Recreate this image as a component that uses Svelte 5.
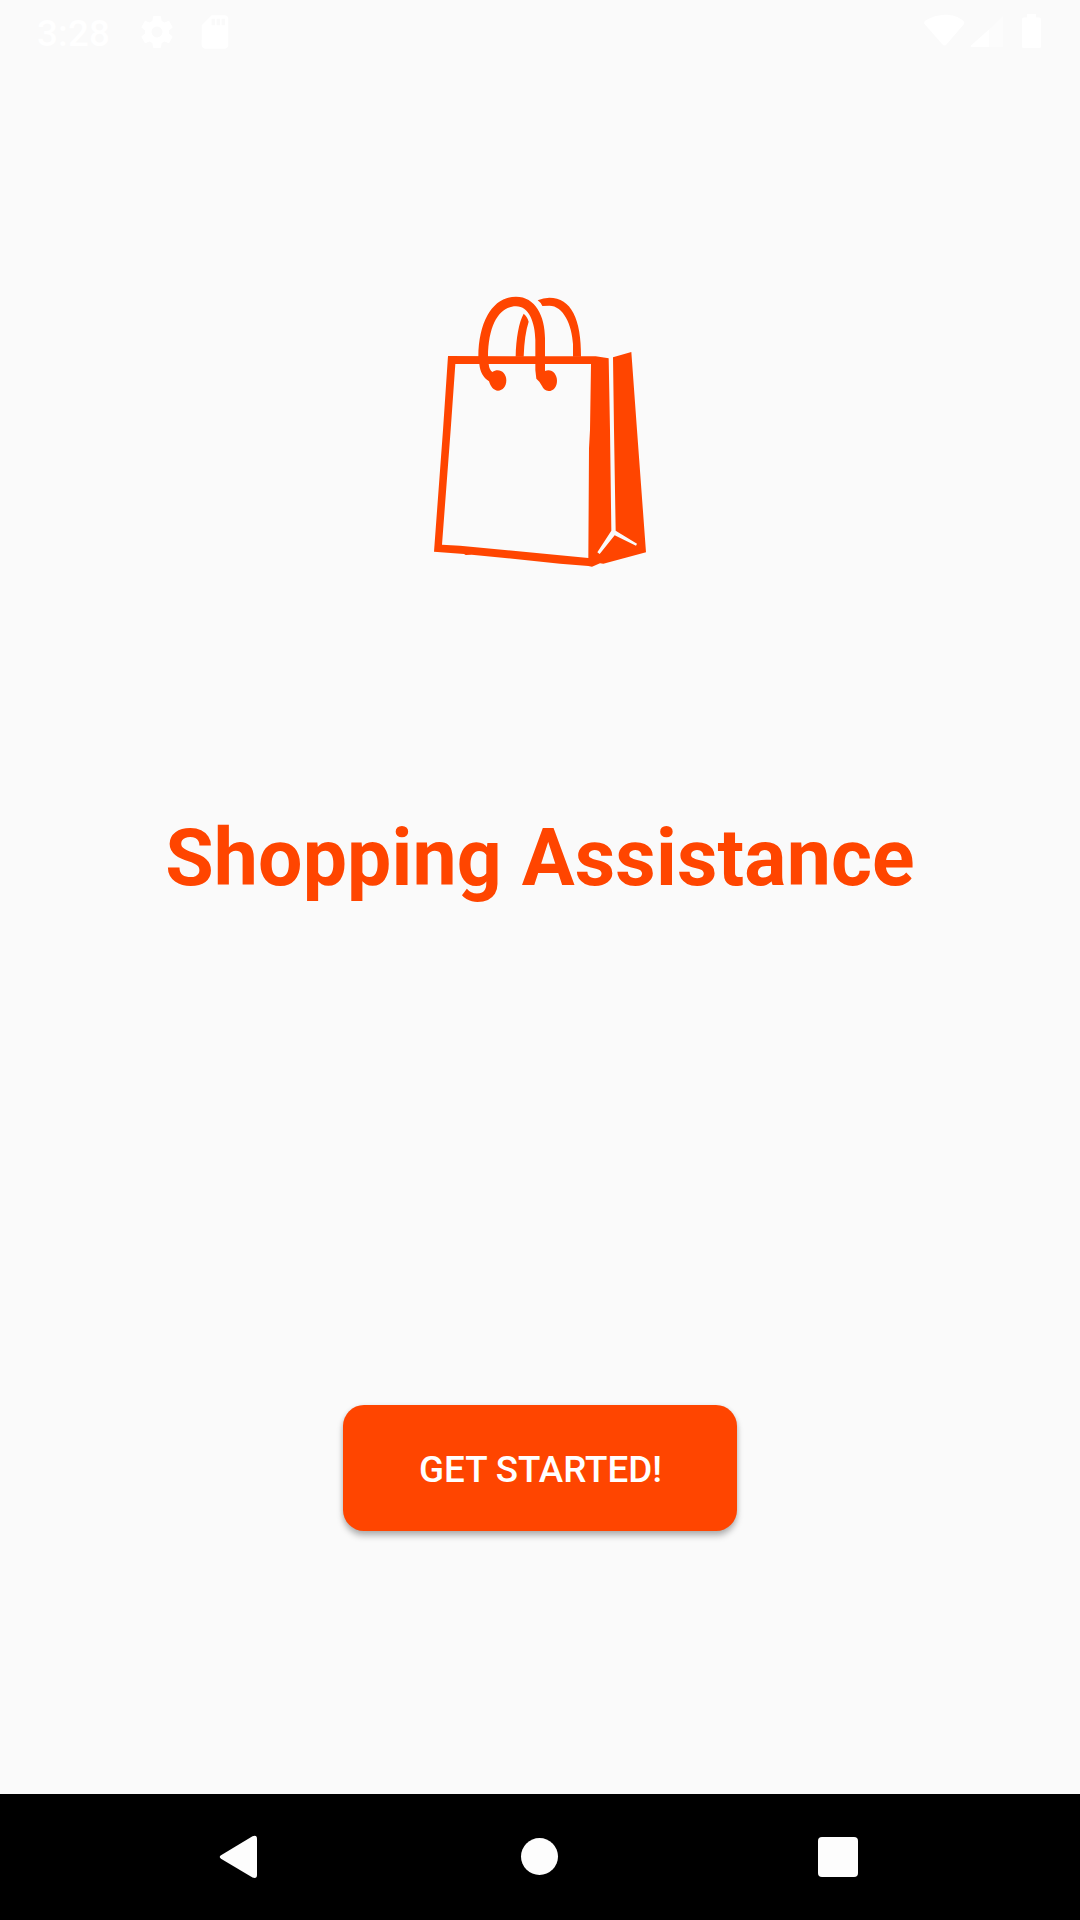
<script>
  let time = '3:28';
  let title = 'Shopping Assistance';
</script>

<div class="screen">
  <header class="status">
    <div class="left">
      <span class="time">{time}</span>
      <svg class="gear" width="40" height="40" viewBox="0 0 24 24">
        <path d="M19.14 12.94c.04-.3.06-.61.06-.94 0-.32-.02-.64-.07-.94l2.03-1.58c.18-.14.23-.41.12-.61l-1.92-3.32c-.12-.22-.37-.29-.59-.22l-2.39.96c-.5-.38-1.03-.7-1.62-.94l-.36-2.54c-.04-.24-.24-.41-.48-.41h-3.84c-.24 0-.43.17-.47.41l-.36 2.54c-.59.24-1.13.57-1.62.94l-2.39-.96c-.22-.08-.47 0-.59.22L2.74 8.87c-.12.21-.08.47.12.61l2.03 1.58c-.05.3-.09.63-.09.94s.02.64.07.94l-2.03 1.58c-.18.14-.23.41-.12.61l1.92 3.32c.12.22.37.29.59.22l2.39-.96c.5.38 1.03.7 1.62.94l.36 2.54c.05.24.24.41.48.41h3.84c.24 0 .44-.17.47-.41l.36-2.54c.59-.24 1.13-.56 1.62-.94l2.39.96c.22.08.47 0 .59-.22l1.92-3.32c.12-.22.07-.47-.12-.61l-2.01-1.58zM12 15.25c-1.790 0-3.250-1.460-3.250-3.250s1.460-3.250 3.250-3.250 3.250 1.460 3.250 3.250-1.460 3.250-3.250 3.250z" />
      </svg>
      <svg class="card" width="40" height="40" viewBox="0 0 24 24">
        <path d="M18 2h-8L4.020 8 4 20c0 1.100.9 2 2 2h12c1.100 0 2-.9 2-2V4c0-1.100-.9-2-2-2zm-6 6h-2V4h2v4zm3 0h-2V4h2v4zm3 0h-2V4h2v4z" />
      </svg>
    </div>
    <svg class="signals" width="120" height="36" viewBox="0 0 120 36">
      <path d="M1.2 6.8C13-1.2 30-1.2 39.2 6.8Q41.200 8.500 39.600 10.500L22.500 30.500Q20.500 32.500 18.500 30.500L1 10.500Q-.8 8.500 1.200 6.800Z" />
      <path class="dim" d="M65 15.500L79 2V33H65Z" />
      <path d="M65 15.500V33H48Q46 33 47 31.500Z" />
      <path d="M103 0H112V3.500H115.500Q117 3.500 117 5V32.500Q117 34 115.500 34H99.500Q98 34 98 32.500V5Q98 3.500 99.500 3.500H103Z" />
    </svg>
  </header>

  <main>
    <svg class="bag" width="240" height="300" viewBox="0 0 720 900">
      <path fill-rule="evenodd" d="M84 228L527 229L566 235L570 450L574 752L532 817L539 822L584 766L648 797L651 791L587 752L582 450L579 232L634 216L651 450L678 817L550 851L540 850L516 860L505 858L420 851L155 824L137 825L132 822L42 815L69 450ZM106 252L92 450L66 794L120 797L505 834L507 505L510 450L513 252Z" />
      <path d="M175 230C176 118 222 50 288 50C346 50 375 108 375 175V273C395 265 411 282 411 302C411 320 400 333 386 333C376 333 370 326 366 318L358 305L349 296L346 270V180C345 128 327 79 288 79C240 79 205 130 204 230L206 252Q208 270 217 276C236 263 259 276 259 301C259 319 248 332 234 332C221 332 212 320 207 304C190 293 180 275 178 252Z" />
      <path d="M353 61Q370 53 388 53C454 53 484 118 483 230H459V192C456 135 430 77 388 77Q377 77 367 78Q362 67 353 61Z" />
      <path d="M287 230C288 175 297 125 311 101Q321 108 326 125Q313 165 311 230Z" />
    </svg>
    <h1>{title}</h1>
    <button type="button">GET STARTED!</button>
  </main>

  <nav>
    <svg width="44" height="44" viewBox="0 0 44 44">
      <path d="M4 20.300L35.500 1.200Q40 -.5 40 4V40Q40 44 35.500 42.500L4 23.700Q1.500 22 4 20.300Z" />
    </svg>
    <svg width="44" height="44" viewBox="0 0 44 44"><circle cx="22.500" cy="21.500" r="18.500" /></svg>
    <svg width="44" height="44" viewBox="0 0 44 44"><rect x="2" y="2" width="40" height="40" rx="4" /></svg>
  </nav>
</div>

<style>
  :global(body) { margin: 0; }
  .screen {
    width: 1080px;
    height: 1920px;
    display: flex;
    flex-direction: column;
    background: #fafafa;
    font-family: Roboto, sans-serif;
    overflow: hidden;
  }
  svg { display: block; flex: none; }
  .status {
    height: 63px;
    box-sizing: border-box;
    padding: 0 36px 0 37px;
    display: flex;
    justify-content: space-between;
    color: #fff;
    fill: #fff;
  }
  .left { display: flex; }
  .time {
    width: 100px;
    font-size: 36.75px;
    font-weight: 500;
    line-height: 43px;
    padding-top: 12px;
    letter-spacing: 0.2px;
  }
  .gear { margin-top: 12px; }
  .card { margin: 12px 0 0 18px; }
  .signals { margin-top: 14px; }
  .dim { opacity: 0.4; }
  main {
    flex: 1;
    display: flex;
    flex-direction: column;
    align-items: center;
  }
  .bag { margin-top: 217px; fill: #ff4500; }
  h1 {
    margin: 232px 0 0;
    font-size: 78.75px;
    line-height: 92px;
    font-weight: 700;
    letter-spacing: 0.15px;
    color: #ff4500;
    white-space: nowrap;
  }
  button {
    margin-top: 501px;
    width: 394px;
    height: 126px;
    padding: 2px 0 0 1px;
    border: 0;
    border-radius: 21px;
    background: #ff4500;
    color: #fff;
    font: 500 36.75px/43px Roboto, sans-serif;
    box-shadow: 0 5px 6px rgba(0, 0, 0, 0.25), 0 1px 5px rgba(0, 0, 0, 0.1);
  }
  nav {
    height: 126px;
    display: flex;
    justify-content: space-between;
    align-items: center;
    box-sizing: border-box;
    padding: 0 220px 0 217px;
    background: #000;
    fill: #fdfdfd;
  }
</style>
